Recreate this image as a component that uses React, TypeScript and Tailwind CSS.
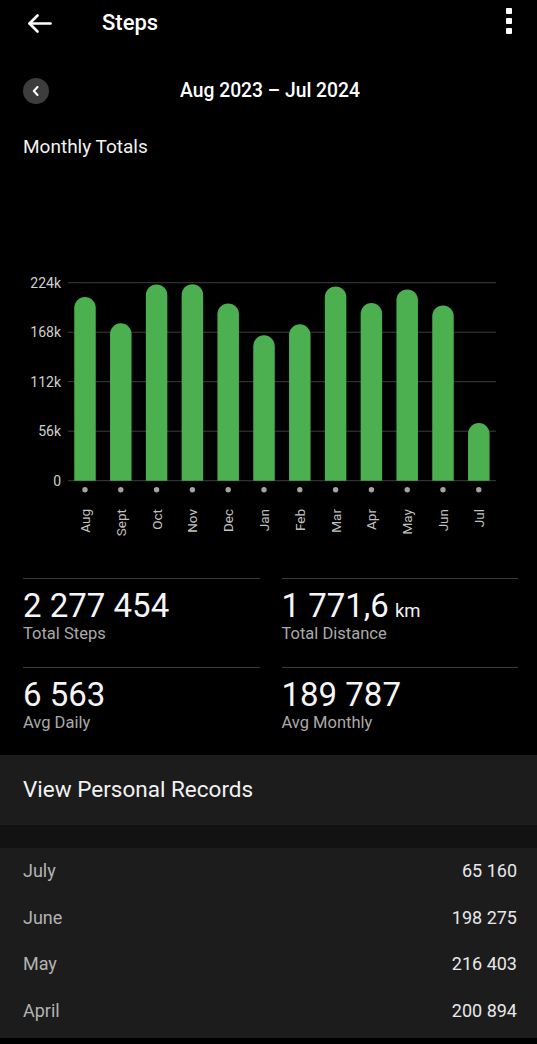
import React from "react";

const months = ["Aug", "Sept", "Oct", "Nov", "Dec", "Jan", "Feb", "Mar", "Apr", "May", "Jun", "Jul"];
const totals = [207700, 178000, 222000, 222300, 200600, 164500, 177000, 219800, 200894, 216403, 198275, 65160];
const ticks = [
  { label: "224k", v: 224000 },
  { label: "168k", v: 168000 },
  { label: "112k", v: 112000 },
  { label: "56k", v: 56000 },
  { label: "0", v: 0 },
];

const records = [
  { month: "July", value: "65 160" },
  { month: "June", value: "198 275" },
  { month: "May", value: "216 403" },
  { month: "April", value: "200 894" },
];

// chart geometry (svg coords, page y minus 260)
const BASE = 220.7;
const SCALE = 198 / 224000;
const barX = (i: number) => 85 + i * 35.8;
const BAR_W = 21.5;

function barPath(i: number, v: number) {
  const r = BAR_W / 2;
  const x0 = barX(i) - r;
  const top = BASE - v * SCALE;
  return `M${x0} ${BASE} L${x0} ${top + r} A${r} ${r} 0 0 1 ${x0 + BAR_W} ${top + r} L${x0 + BAR_W} ${BASE} Z`;
}

function Chart() {
  return (
    <svg width="537" height="290" viewBox="0 0 537 290" className="block">
      {/* grid */}
      {ticks.map((t) => {
        const y = BASE - t.v * SCALE;
        return (
          <g key={t.label}>
            <line x1="68" x2="496" y1={y} y2={y} stroke="#3d3d3d" strokeWidth="1" />
            <text x="61" y={y} textAnchor="end" dominantBaseline="central" fontSize="14" fill="#cfcfcf">
              {t.label}
            </text>
          </g>
        );
      })}
      {/* bars */}
      {totals.map((v, i) => (
        <path key={months[i]} d={barPath(i, v)} fill="#4caf50" />
      ))}
      {/* dots + month labels */}
      {months.map((m, i) => (
        <g key={m}>
          <circle cx={barX(i)} cy="229.7" r="2.7" fill="#a3a3a3" />
          <text
            x={barX(i)}
            y="249"
            transform={`rotate(-90 ${barX(i)} 249)`}
            textAnchor="end"
            dominantBaseline="central"
            fontSize="13.5"
            fill="#c2c2c2"
          >
            {m}
          </text>
        </g>
      ))}
    </svg>
  );
}

function Stat({ value, unit, label }: { value: string; unit?: string; label: string }) {
  return (
    <div className="border-t border-[#3a3a3a] pt-[9px]">
      <div className="flex h-[36px] items-baseline">
        <span className="text-[33px] leading-[36px] text-[#f5f5f5]">{value}</span>
        {unit && <span className="ml-[6px] text-[18.5px] leading-[20px] text-[#f0f0f0]">{unit}</span>}
      </div>
      <div className="text-[16.5px] leading-[20px] text-[#aaaaaa]">{label}</div>
    </div>
  );
}

export default function App() {
  return (
    <div className="min-h-screen bg-black text-white font-['Roboto',sans-serif]">
      {/* Header */}
      <header className="flex h-[46px] items-center pl-[28px] pr-[25px]">
        <svg width="24" height="19" viewBox="0 0 24 19" fill="none" stroke="white" strokeWidth="2.6" strokeLinecap="round" strokeLinejoin="round">
          <path d="M22.5 9.5H1.8" />
          <path d="M9.5 1.5 1.5 9.5l8 8" />
        </svg>
        <h1 className="ml-[50px] text-[22px] font-medium leading-[28px]">Steps</h1>
        <svg className="ml-auto self-start mt-[8px]" width="6" height="26" viewBox="0 0 6 26" fill="white">
          <rect x="0" y="0" width="6" height="6" rx="1" />
          <rect x="0" y="10" width="6" height="6" rx="1" />
          <rect x="0" y="20" width="6" height="6" rx="1" />
        </svg>
      </header>

      {/* Date range */}
      <div className="mt-[30px] flex h-[30px] items-center pl-[23px]">
        <button className="flex h-[26px] w-[26px] items-center justify-center rounded-full bg-[#3d3d3d]">
          <svg width="8" height="10" viewBox="0 0 8 10" fill="none" stroke="white" strokeWidth="2" strokeLinecap="round" strokeLinejoin="round">
            <path d="M5.5 1 1.8 5l3.7 4" />
          </svg>
        </button>
        <div className="flex-1 text-center text-[19.3px] font-medium leading-[30px]">Aug 2023 – Jul 2024</div>
        <div className="w-[46px]" />
      </div>

      <h2 className="mt-[29px] px-[23px] text-[19px] leading-[24px] text-[#f2f2f2]">Monthly Totals</h2>

      {/* Chart */}
      <div className="mt-[101px]">
        <Chart />
      </div>

      {/* Stats */}
      <div className="mt-[28px] grid grid-cols-2 gap-x-[22px] gap-y-[23px] pl-[23px] pr-[19px] pb-[22px]">
        <Stat value="2 277 454" label="Total Steps" />
        <Stat value="1 771,6" unit="km" label="Total Distance" />
        <Stat value="6 563" label="Avg Daily" />
        <Stat value="189 787" label="Avg Monthly" />
      </div>

      {/* Personal records */}
      <div className="flex h-[70px] items-center bg-[#1c1c1c] px-[23px]">
        <span className="text-[22.5px] text-[#f2f2f2]">View Personal Records</span>
      </div>
      <div className="h-[23px] bg-[#121212]" />

      {/* Monthly list */}
      <div className="bg-[#1c1c1c] pb-[4px]">
        {records.map((r) => (
          <div key={r.month} className="flex h-[46.5px] items-center justify-between pl-[23px] pr-[20px] text-[18px] leading-[46.5px]">
            <span className="text-[#b3b3b3]">{r.month}</span>
            <span className="text-[#e8e8e8]">{r.value}</span>
          </div>
        ))}
      </div>
    </div>
  );
}
